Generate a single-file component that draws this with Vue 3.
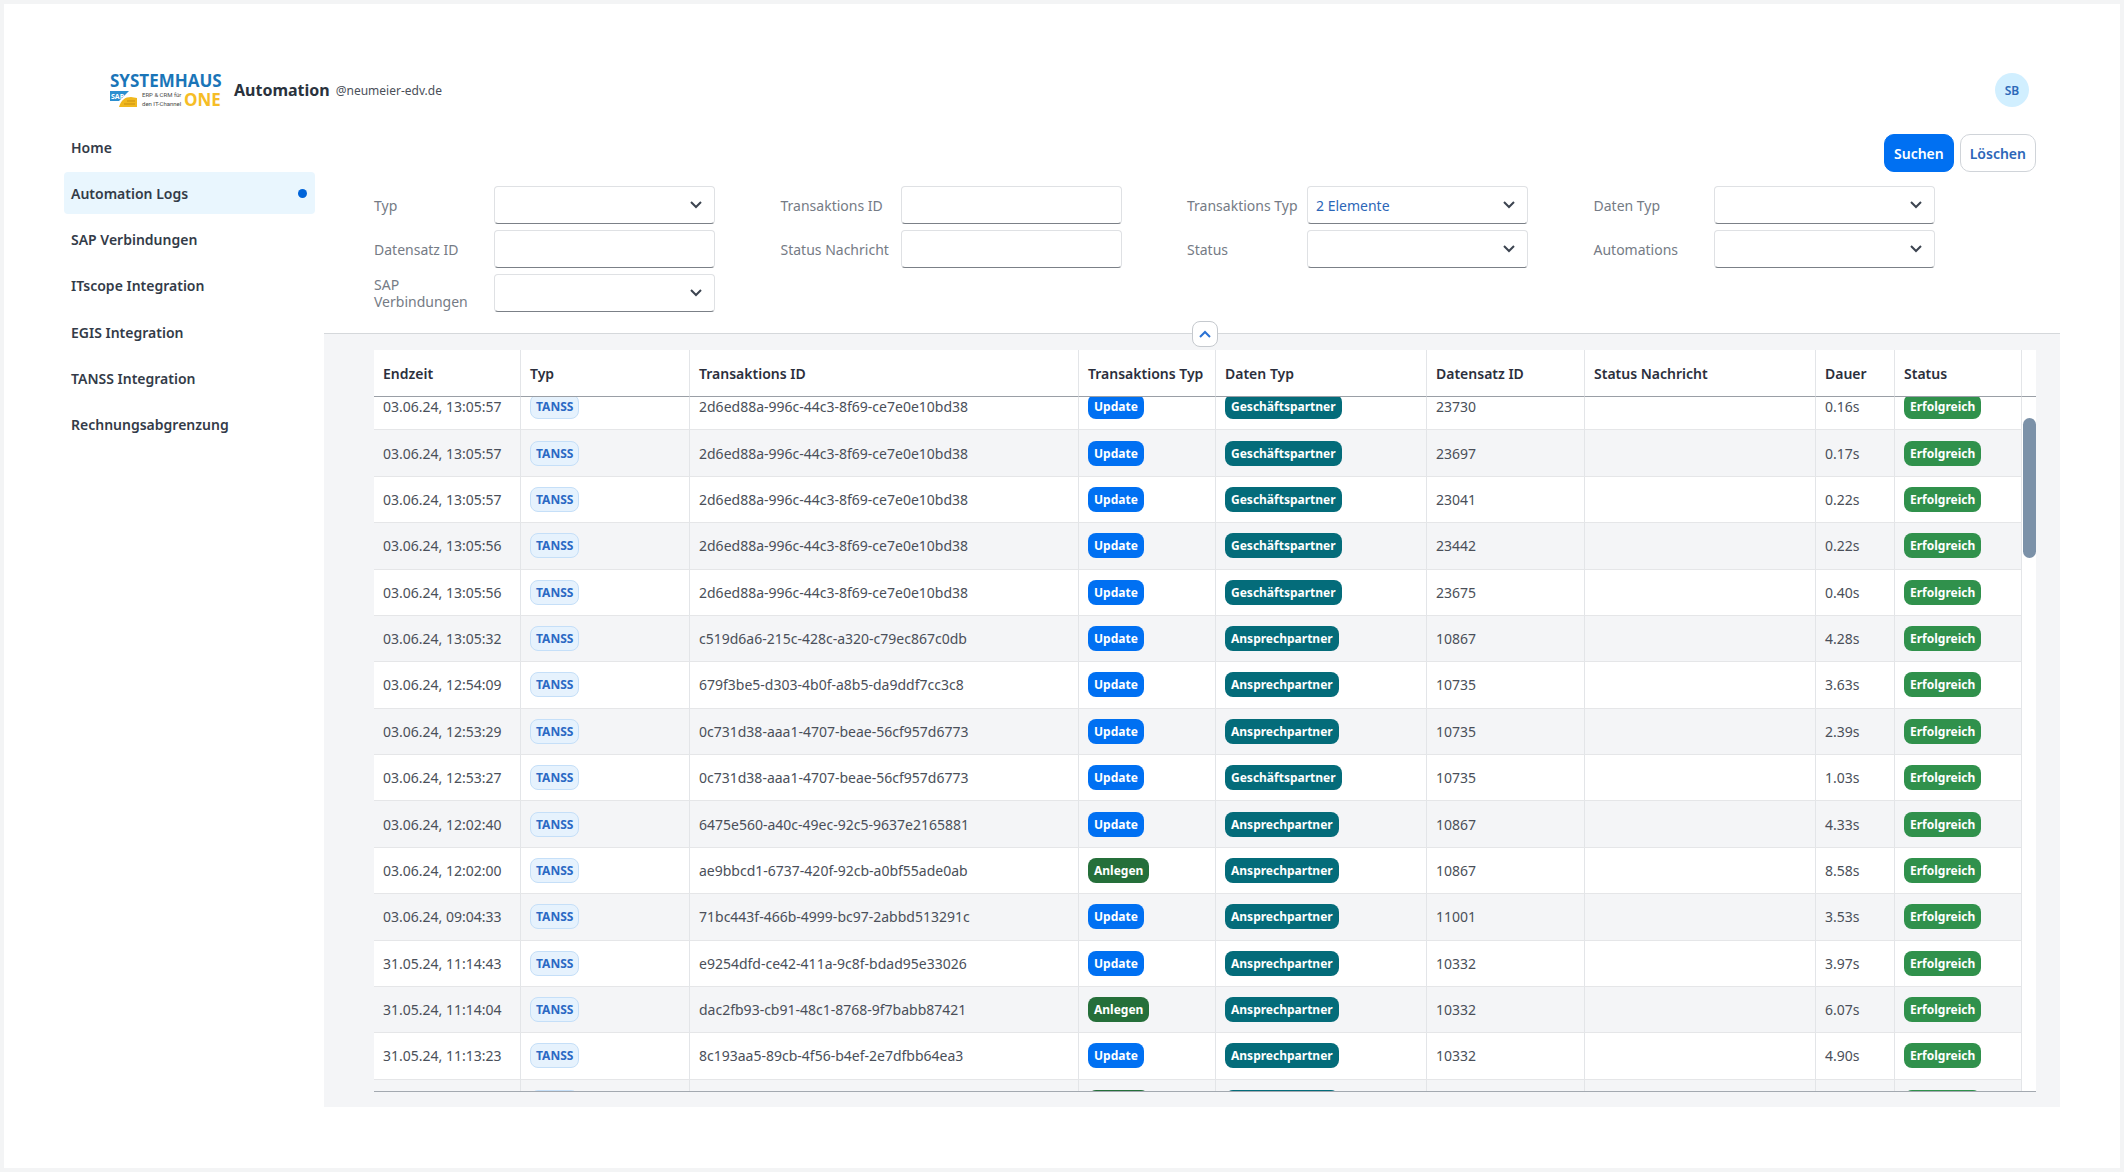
<script setup>
import { onMounted, ref } from 'vue'

const navItems = [
  'Home',
  'Automation Logs',
  'SAP Verbindungen',
  'ITscope Integration',
  'EGIS Integration',
  'TANSS Integration',
  'Rechnungsabgrenzung',
]
const activeItem = 'Automation Logs'

const filters = [
  { id: 'typ', label: 'Typ', select: true },
  { id: 'transaktions-id', label: 'Transaktions ID' },
  { id: 'transaktions-typ', label: 'Transaktions Typ', select: true, value: '2 Elemente' },
  { id: 'daten-typ', label: 'Daten Typ', select: true },
  { id: 'datensatz-id', label: 'Datensatz ID' },
  { id: 'status-nachricht', label: 'Status Nachricht' },
  { id: 'status', label: 'Status', select: true },
  { id: 'automations', label: 'Automations', select: true },
  { id: 'sap-verbindungen', label: 'SAP Verbindungen', select: true },
]

const columns = [
  { title: 'Endzeit', width: 147 },
  { title: 'Typ', width: 169 },
  { title: 'Transaktions ID', width: 389 },
  { title: 'Transaktions Typ', width: 137 },
  { title: 'Daten Typ', width: 211 },
  { title: 'Datensatz ID', width: 158 },
  { title: 'Status Nachricht', width: 231 },
  { title: 'Dauer', width: 79 },
  { title: 'Status', width: 127 },
]

const rows = [
  ['03.06.24, 13:05:57', '2d6ed88a-996c-44c3-8f69-ce7e0e10bd38', 'Update', 'Geschäftspartner', '23730', '0.16s'],
  ['03.06.24, 13:05:57', '2d6ed88a-996c-44c3-8f69-ce7e0e10bd38', 'Update', 'Geschäftspartner', '23697', '0.17s'],
  ['03.06.24, 13:05:57', '2d6ed88a-996c-44c3-8f69-ce7e0e10bd38', 'Update', 'Geschäftspartner', '23041', '0.22s'],
  ['03.06.24, 13:05:56', '2d6ed88a-996c-44c3-8f69-ce7e0e10bd38', 'Update', 'Geschäftspartner', '23442', '0.22s'],
  ['03.06.24, 13:05:56', '2d6ed88a-996c-44c3-8f69-ce7e0e10bd38', 'Update', 'Geschäftspartner', '23675', '0.40s'],
  ['03.06.24, 13:05:32', 'c519d6a6-215c-428c-a320-c79ec867c0db', 'Update', 'Ansprechpartner', '10867', '4.28s'],
  ['03.06.24, 12:54:09', '679f3be5-d303-4b0f-a8b5-da9ddf7cc3c8', 'Update', 'Ansprechpartner', '10735', '3.63s'],
  ['03.06.24, 12:53:29', '0c731d38-aaa1-4707-beae-56cf957d6773', 'Update', 'Ansprechpartner', '10735', '2.39s'],
  ['03.06.24, 12:53:27', '0c731d38-aaa1-4707-beae-56cf957d6773', 'Update', 'Geschäftspartner', '10735', '1.03s'],
  ['03.06.24, 12:02:40', '6475e560-a40c-49ec-92c5-9637e2165881', 'Update', 'Ansprechpartner', '10867', '4.33s'],
  ['03.06.24, 12:02:00', 'ae9bbcd1-6737-420f-92cb-a0bf55ade0ab', 'Anlegen', 'Ansprechpartner', '10867', '8.58s'],
  ['03.06.24, 09:04:33', '71bc443f-466b-4999-bc97-2abbd513291c', 'Update', 'Ansprechpartner', '11001', '3.53s'],
  ['31.05.24, 11:14:43', 'e9254dfd-ce42-411a-9c8f-bdad95e33026', 'Update', 'Ansprechpartner', '10332', '3.97s'],
  ['31.05.24, 11:14:04', 'dac2fb93-cb91-48c1-8768-9f7babb87421', 'Anlegen', 'Ansprechpartner', '10332', '6.07s'],
  ['31.05.24, 11:13:23', '8c193aa5-89cb-4f56-b4ef-2e7dfbb64ea3', 'Update', 'Ansprechpartner', '10332', '4.90s'],
  ['', '', 'Anlegen', 'Ansprechpartner', '', ''],
]

const scroller = ref(null)
onMounted(() => {
  scroller.value.scrollTop = 13
})
</script>

<template>
  <div class="page">
    <header class="shell">
      <a class="logo" href="#" aria-label="Systemhaus One">
        <svg width="114" height="38" viewBox="0 0 114 38">
          <text x="0" y="16" class="logo-name">SYSTEMHAUS</text>
          <path d="M0 20h19L9 30H0z" fill="#2b8fd0" />
          <path d="M9 36c2-7 6-10 12-10l6 1v9z" fill="#f0b81e" />
          <path d="M17 30h8M14 33h11" stroke="#c98f10" fill="none" />
          <text x="1" y="28" class="logo-sap">SAP</text>
          <text x="32" y="26" class="logo-tag">ERP &amp; CRM für</text>
          <text x="32" y="35" class="logo-tag">den IT-Channel</text>
          <text x="74" y="35" class="logo-name logo-one">ONE</text>
        </svg>
      </a>
      <h1>Automation</h1>
      <span class="domain">@neumeier-edv.de</span>
      <button class="avatar" type="button">SB</button>
    </header>

    <div class="body">
      <nav class="side">
        <a v-for="item in navItems" :key="item" href="#" :class="{ active: item === activeItem }">
          {{ item }}<i v-if="item === activeItem" class="dot"></i>
        </a>
      </nav>

      <main class="main">
        <section class="filter-bar">
          <div class="actions">
            <button class="btn primary" type="button">Suchen</button>
            <button class="btn" type="button">Löschen</button>
          </div>
          <form class="filters" @submit.prevent>
            <div v-for="f in filters" :key="f.id" class="filter">
              <label :for="f.id">{{ f.label }}</label>
              <div v-if="f.select" class="field">
                <select :id="f.id">
                  <option>{{ f.value || '' }}</option>
                </select>
                <svg class="chevron" width="12" height="8" viewBox="0 0 12 8">
                  <path d="M1 1l5 5 5-5" fill="none" stroke="#3c4450" stroke-width="2" />
                </svg>
              </div>
              <div v-else class="field">
                <input :id="f.id" type="text" />
              </div>
            </div>
          </form>
          <button class="collapse" type="button" aria-label="Filter einklappen">
            <svg width="12" height="8" viewBox="0 0 12 8">
              <path d="M1 7l5-5 5 5" fill="none" stroke="#2a72d4" stroke-width="2" />
            </svg>
          </button>
        </section>

        <section class="content">
          <div class="grid">
            <div ref="scroller" class="scroller">
              <table>
                <colgroup>
                  <col v-for="c in columns" :key="c.title" :style="{ width: c.width + 'px' }" />
                </colgroup>
                <thead>
                  <tr>
                    <th v-for="c in columns" :key="c.title" scope="col">{{ c.title }}</th>
                  </tr>
                </thead>
                <tbody>
                  <tr v-for="(r, i) in rows" :key="i">
                    <td>{{ r[0] }}</td>
                    <td><span class="badge tanss">TANSS</span></td>
                    <td>{{ r[1] }}</td>
                    <td><span class="badge" :class="r[2].toLowerCase()">{{ r[2] }}</span></td>
                    <td><span class="badge partner">{{ r[3] }}</span></td>
                    <td>{{ r[4] }}</td>
                    <td></td>
                    <td>{{ r[5] }}</td>
                    <td><span class="badge success">Erfolgreich</span></td>
                  </tr>
                </tbody>
              </table>
            </div>
            <div class="track">
              <div class="track-head"></div>
              <div class="thumb"></div>
            </div>
          </div>
        </section>
      </main>
    </div>
  </div>
</template>

<style>
body {
  margin: 0;
}
</style>

<style scoped>
* {
  box-sizing: border-box;
}

.page {
  display: flex;
  flex-direction: column;
  height: 100vh;
  border: 4px solid #f3f4f5;
  background: #fff;
  color: #4a4f59;
  font: 14px/17px "Noto Sans", sans-serif;
}

button,
input,
select {
  font: inherit;
}

.shell {
  display: flex;
  align-items: center;
  height: 122px;
  padding: 50px 91px 0 106px;
}

.logo {
  display: block;
  height: 38px;
}

.logo svg {
  overflow: visible;
}

.logo-name {
  font: bold 17px "Open Sans", sans-serif;
  fill: #1a75b8;
}

.logo-one {
  fill: #f6bd26;
}

.logo-sap {
  font: bold 7px "Open Sans", sans-serif;
  fill: #fff;
}

.logo-tag {
  font: 6px Roboto, sans-serif;
  fill: #4a4a4a;
}

h1 {
  margin: 0 6px 0 10px;
  color: #2a323d;
  font-size: 16px;
  line-height: 22px;
}

.domain {
  font-size: 12px;
}

.avatar {
  width: 34px;
  height: 34px;
  margin-left: auto;
  padding: 0;
  border: 0;
  border-radius: 50%;
  background: #d1efff;
  color: #2c69b8;
  font-size: 12px;
  font-weight: 600;
}

.body {
  display: flex;
  flex: 1;
  gap: 9px;
  min-height: 0;
  padding: 0 60px 61px;
}

.side {
  display: flex;
  flex: none;
  flex-direction: column;
  justify-content: space-between;
  width: 251px;
  height: 320px;
}

.side a {
  display: flex;
  align-items: center;
  justify-content: space-between;
  height: 42px;
  padding: 0 8px 0 7px;
  border-radius: 4px;
  color: #333b48;
  font-weight: 600;
  text-decoration: none;
}

.side a.active {
  background: #e9f6fe;
}

.dot {
  width: 9px;
  height: 9px;
  border-radius: 50%;
  background: #0064d9;
}

.main {
  display: flex;
  flex: 1;
  flex-direction: column;
  min-width: 0;
}

.filter-bar {
  position: relative;
  padding: 8px 24px 21px 50px;
  border-bottom: 1px solid #d5d8db;
}

.actions {
  display: flex;
  justify-content: flex-end;
  gap: 6px;
}

.btn {
  height: 38px;
  padding: 0 9px;
  border: 1px solid #d0d4d9;
  border-radius: 10px;
  background: #fff;
  color: #2c66b8;
  font-weight: 600;
}

.btn.primary {
  border-color: #0070f2;
  background: #0070f2;
  color: #fff;
}

.filters {
  display: grid;
  grid-template-columns: repeat(4, 1fr);
  gap: 6px 0;
  margin: 14px 36px 0 0;
}

.filter {
  display: grid;
  grid-template-columns: 120px 221px;
  align-items: center;
  height: 38px;
}

.filter label {
  padding-right: 8px;
  color: #757b85;
}

.field {
  position: relative;
}

.field input,
.field select {
  display: block;
  width: 100%;
  height: 38px;
  padding: 0 8px;
  border: 1px solid #dfe1e4;
  border-bottom-color: #7b8087;
  border-radius: 4px;
  background: #fff;
  color: #2c66b8;
  appearance: none;
}

.chevron {
  position: absolute;
  top: 15px;
  right: 13px;
  pointer-events: none;
}

.collapse {
  position: absolute;
  bottom: -14px;
  left: 50%;
  display: grid;
  place-items: center;
  width: 26px;
  height: 26px;
  padding: 0;
  border: 1px solid #c5c9ce;
  border-radius: 8px;
  background: #fff;
}

.content {
  flex: 1;
  min-height: 0;
  padding: 16px 24px 15px 50px;
  background: #f4f5f7;
}

.grid {
  display: flex;
  height: 100%;
  border-bottom: 1px solid #a3a9b0;
}

.scroller {
  flex: 1;
  min-width: 0;
  overflow-y: scroll;
  scrollbar-width: none;
}

table {
  width: 100%;
  border-spacing: 0;
  table-layout: fixed;
}

th,
td {
  padding: 0 9px;
  border-right: 1px solid #e3e5e8;
  text-align: left;
  white-space: nowrap;
}

th {
  position: sticky;
  top: 0;
  z-index: 1;
  height: 47px;
  border-bottom: 1px solid #9a9fa6;
  background: #fff;
  color: #2b2f3c;
  font-weight: 600;
}

tbody {
  height: 742px;
}

td {
  border-bottom: 1px solid #e5e6e8;
  background: #fff;
}

tr:nth-child(even) td {
  background: #f4f5f7;
}

.badge {
  display: inline-block;
  height: 25px;
  padding: 0 5px;
  border: 1px solid transparent;
  border-radius: 8px;
  color: #fff;
  font-size: 12px;
  font-weight: 700;
  line-height: 23px;
  vertical-align: middle;
}

.tanss {
  border-color: #c5dff8;
  background: #e6f2fd;
  color: #2b69c4;
}

.update {
  background: #0070f2;
}

.anlegen {
  background: #256f3a;
}

.partner {
  background: #046c7a;
}

.success {
  background: #30914c;
}

.track {
  width: 14px;
  background: #fff;
}

.track-head {
  height: 47px;
  border-bottom: 1px solid #9a9fa6;
}

.thumb {
  width: 13px;
  height: 140px;
  margin: 21px 0 0 1px;
  border-radius: 7px;
  background: #7b91a8;
}
</style>
